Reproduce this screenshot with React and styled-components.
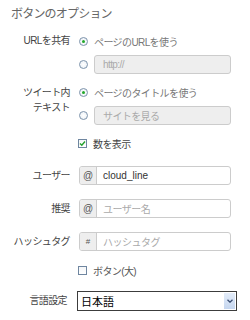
import React from "react";
import styled, { createGlobalStyle } from "styled-components";

const GlobalStyle = createGlobalStyle`
  body {
    margin: 0;
    background: #fff;
    font-family: "Liberation Sans", "Noto Sans CJK JP", sans-serif;
  }
`;

const Panel = styled.div`
  width: 250px;
  height: 320px;
  box-sizing: border-box;
  padding-right: 19px;
  overflow: hidden;
`;

const Title = styled.h3`
  margin: 0 0 3px;
  height: 28px;
  line-height: 28px;
  padding-left: 11px;
  font-size: 12px;
  font-weight: normal;
  letter-spacing: -0.8px;
  color: #666;
`;

const Field = styled.div`
  display: grid;
  grid-template-columns: 70px 1fr;
  column-gap: 9px;
  align-items: start;
  margin-top: ${(p) => p.$gap || 0}px;
`;

const Label = styled.div`
  text-align: right;
  font-size: 10px;
  letter-spacing: -0.6px;
  color: #444;
  line-height: ${(p) => p.$lh || 19}px;
  padding-top: ${(p) => p.$pt || 0}px;
  padding-right: ${(p) => p.$pr || 0}px;
`;

const Controls = styled.div`
  display: flex;
  flex-direction: column;
  gap: 3px;
`;

const OptionRow = styled.label`
  display: flex;
  align-items: center;
  height: 20px;
  gap: 6px;
  font-size: 10px;
  letter-spacing: -0.6px;
  color: ${(p) => p.$color || "#777"};
`;

const Radio = styled.span`
  width: 9px;
  height: 9px;
  flex: none;
  box-sizing: border-box;
  border: 1px solid #7d93ab;
  border-radius: 50%;
  background: radial-gradient(circle, #fff 0%, #e8eef4 100%);
  display: flex;
  align-items: center;
  justify-content: center;

  &::after {
    content: "";
    width: 3px;
    height: 3px;
    border-radius: 50%;
    background: ${(p) => (p.$checked ? "#22a82a" : "transparent")};
  }
`;

const Box = styled.span`
  width: 9px;
  height: 9px;
  flex: none;
  box-sizing: border-box;
  border: 1px solid #6f86a0;
  background: linear-gradient(#f4f6f8, #fff);
  display: flex;
  align-items: center;
  justify-content: center;
  margin-left: -1px;
`;

const DisabledInput = styled.div`
  flex: 1;
  height: 19px;
  box-sizing: border-box;
  border: 1px solid #ccc;
  border-radius: 3px;
  background: #eee;
  padding: 0 8px;
  display: flex;
  align-items: center;
  font-size: 10px;
  color: #aaa;
`;

const InputGroup = styled.div`
  height: 19px;
  box-sizing: border-box;
  border: 1px solid #ccc;
  border-radius: 3px;
  display: flex;
  overflow: hidden;
  background: #fff;
`;

const Addon = styled.span`
  width: 16px;
  flex: none;
  background: #eee;
  border-right: 1px solid #ccc;
  display: flex;
  align-items: center;
  justify-content: center;
  font-size: ${(p) => p.$size || 10}px;
  color: #555;
`;

const GroupText = styled.span`
  flex: 1;
  display: flex;
  align-items: center;
  padding-left: 6px;
  font-size: 10px;
  letter-spacing: ${(p) => (p.$placeholder ? "-0.5px" : "0")};
  color: ${(p) => (p.$placeholder ? "#aaa" : "#333")};
`;

const SelectBox = styled.div`
  height: 20px;
  box-sizing: border-box;
  margin-left: -2px;
  margin-right: -6px;
  border: 1px solid #3c3c3c;
  background: #fff;
  display: flex;
  align-items: stretch;
`;

const SelectValue = styled.span`
  flex: 1;
  display: flex;
  align-items: center;
  padding-left: 3px;
  font-size: 11px;
  color: #000;
`;

const SelectArrow = styled.span`
  width: 11px;
  margin: 1px;
  background: linear-gradient(#e3ecf9, #c5d6ef);
  display: flex;
  align-items: center;
  justify-content: center;
`;

const Check = () => (
  <svg width="7" height="7" viewBox="0 0 7 7">
    <path d="M1 3.5 L2.8 5.3 L6 1.5" fill="none" stroke="#24a12c" strokeWidth="1.4" />
  </svg>
);

const Chevron = () => (
  <svg width="6" height="4" viewBox="0 0 6 4">
    <path d="M0.5 0.8 L3 3.2 L5.5 0.8" fill="none" stroke="#3b4f73" strokeWidth="1.3" />
  </svg>
);

const App = () => (
  <>
    <GlobalStyle />
    <Panel>
      <Title>ボタンのオプション</Title>

      <Field>
        <Label $lh={20}>URLを共有</Label>
        <Controls>
          <OptionRow>
            <Radio $checked />
            ページのURLを使う
          </OptionRow>
          <OptionRow>
            <Radio />
            <DisabledInput>http://</DisabledInput>
          </OptionRow>
        </Controls>
      </Field>

      <Field $gap={8}>
        <Label $lh={15} $pt={2.5}>
          ツイート内
          <br />
          テキスト
        </Label>
        <Controls>
          <OptionRow>
            <Radio $checked />
            ページのタイトルを使う
          </OptionRow>
          <OptionRow>
            <Radio />
            <DisabledInput>サイトを見る</DisabledInput>
          </OptionRow>
        </Controls>
      </Field>

      <Field $gap={8}>
        <span />
        <OptionRow $color="#444">
          <Box>
            <Check />
          </Box>
          数を表示
        </OptionRow>
      </Field>

      <Field $gap={13}>
        <Label>ユーザー</Label>
        <InputGroup>
          <Addon>@</Addon>
          <GroupText>cloud_line</GroupText>
        </InputGroup>
      </Field>

      <Field $gap={14}>
        <Label>推奨</Label>
        <InputGroup>
          <Addon>@</Addon>
          <GroupText $placeholder>ユーザー名</GroupText>
        </InputGroup>
      </Field>

      <Field $gap={14}>
        <Label>ハッシュタグ</Label>
        <InputGroup>
          <Addon $size={8}>#</Addon>
          <GroupText $placeholder>ハッシュタグ</GroupText>
        </InputGroup>
      </Field>

      <Field $gap={9}>
        <span />
        <OptionRow $color="#555">
          <Box />
          ボタン(大)
        </OptionRow>
      </Field>

      <Field $gap={11}>
        <Label $lh={20} $pr={3}>言語設定</Label>
        <SelectBox>
          <SelectValue>日本語</SelectValue>
          <SelectArrow>
            <Chevron />
          </SelectArrow>
        </SelectBox>
      </Field>
    </Panel>
  </>
);

export default App;
